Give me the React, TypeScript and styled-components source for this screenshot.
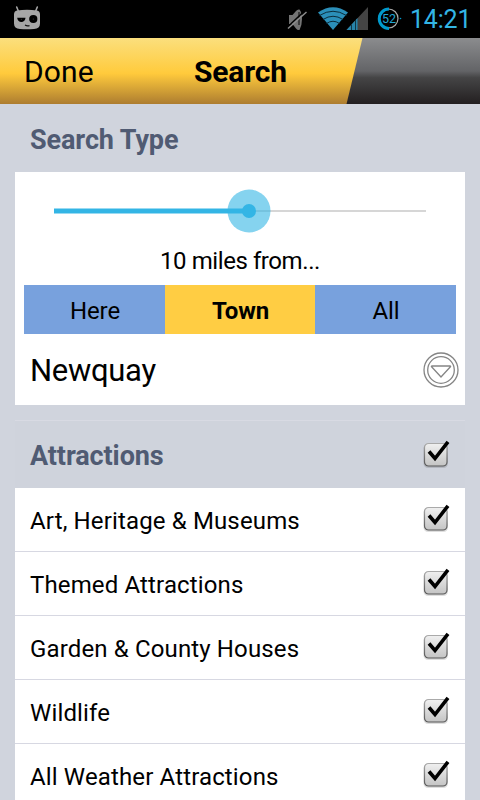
import React, { useState } from 'react';
import styled, { createGlobalStyle } from 'styled-components';

const GlobalStyle = createGlobalStyle`
  * { box-sizing: border-box; }
  body { margin: 0; background: #d0d4dd; font-family: Roboto, sans-serif; color: #000; }
  button { font: inherit; color: inherit; border: 0; padding: 0; margin: 0; background: none; }
`;

const Screen = styled.div`
  width: 480px;
  height: 800px;
  overflow: hidden;
  background: #d0d4dd;
`;

const StatusBar = styled.div`
  display: flex;
  justify-content: space-between;
  height: 38px;
  background: #000;
`;

const StatusIcons = styled.div`
  display: flex;
`;

const Clock = styled.span`
  width: 70px;
  font-size: 25px;
  line-height: 40px;
  letter-spacing: -0.2px;
  white-space: nowrap;
  color: #33b5e5;
`;

const TitleBar = styled.header`
  height: 66px;
  background: linear-gradient(#8b8c8e 0%, #636467 50%, #454546 60%, #231f20 100%);
`;

const TitleTab = styled.div`
  display: flex;
  align-items: center;
  width: 363px;
  height: 66px;
  padding-left: 24px;
  background: linear-gradient(#fbdf7d 0%, #ffcc40 50%, #ffca3c 54%, #ad7d30 100%);
  clip-path: polygon(0 0, 362.5px 0, 346.5px 100%, 0 100%);
`;

const DoneButton = styled.button`
  width: 170px;
  padding-top: 1px;
  text-align: left;
  font-size: 30px;
  line-height: 66px;
  letter-spacing: 0.15px;
`;

const Title = styled.h1`
  margin: 0;
  padding-top: 1px;
  font-size: 30px;
  font-weight: 700;
  line-height: 66px;
  letter-spacing: -0.15px;
`;

const Heading = styled.h2`
  margin: 0;
  font-size: 27px;
  font-weight: 700;
  letter-spacing: -0.1px;
  color: #505b73;
`;

const TypeHeader = styled.div`
  display: flex;
  align-items: center;
  height: 68px;
  padding: 4px 30px 0;
`;

const Panel = styled.section`
  height: 233px;
  margin: 0 15px;
  background: #fff;
`;

const SliderBox = styled.div`
  height: 72px;
  padding: 17px 0 0 39px;
`;

const Distance = styled.div`
  height: 41px;
  line-height: 35px;
  font-size: 24px;
  letter-spacing: -0.42px;
  text-align: center;
`;

const Segments = styled.div`
  display: grid;
  grid-template-columns: 141px 150px 141px;
  grid-template-rows: 49px;
  height: 49px;
  margin: 0 9px;
`;

const Segment = styled.button<{ $active: boolean }>`
  padding: 3px 0 0 1px;
  font-size: 24px;
  line-height: 46px;
  letter-spacing: -0.1px;
  font-weight: ${p => (p.$active ? 700 : 400)};
  background: ${p => (p.$active ? '#ffcd43' : '#78a1dd')};
`;

const TownRow = styled.div`
  display: flex;
  justify-content: space-between;
  align-items: center;
  height: 71px;
  padding: 1px 6px 0 15px;
`;

const Town = styled.span`
  padding-top: 1px;
  font-size: 31px;
  letter-spacing: -0.3px;
`;

const Group = styled.section`
  margin: 15px 15px 0;
`;

const GroupHeader = styled.div`
  display: flex;
  justify-content: space-between;
  align-items: center;
  height: 68px;
  padding: 3px 10px 0 15px;
  border-top: 1px solid #d8dae3;
  background: #cfd3dc;
`;

const Row = styled.div`
  display: flex;
  justify-content: space-between;
  align-items: center;
  height: 64px;
  padding: 0 10px 0 15px;
  border-bottom: 1px solid #d7d8e2;
  background: #fff;
`;

const RowLabel = styled.span`
  padding-top: 2px;
  font-size: 24px;
  letter-spacing: 0.14px;
`;

const CheckButton = styled.button`
  display: flex;
  width: 32px;
  height: 36px;
`;

function RobotIcon() {
  return (
    <svg width="60" height="38" viewBox="0 0 60 38">
      <path d="M16.700 7l2 5M37.300 7l-2 5" stroke="#a6a6a6" strokeWidth="1.600" strokeLinecap="round" />
      <path d="M17 10.500q10-1.500 20 0q3 .5 3 4v9q0 5-6 5.500q-7 .6-14 0q-6-.5-6-5.500v-9q0-3.500 3-4z" fill="#a6a6a6" />
      <path d="M17.200 17.800h8.300a4.150 4.150 0 0 1-8.300 0z" />
      <circle cx="33.300" cy="19" r="4.100" />
      <circle cx="33.300" cy="19" r=".6" fill="#444" />
      <circle cx="21.300" cy="19.200" r=".5" fill="#444" />
      <path d="M25 25q2 1.300 4.500.6" fill="none" stroke="#111" strokeWidth="1.200" />
    </svg>
  );
}

function MuteIcon() {
  return (
    <svg width="28" height="38" viewBox="286 0 28 38">
      <path d="M289 15h3.500l3.500-4q1.500-2 3.500-1.500q2.500 3 2.500 9.500t-2.500 11q-2 .5-3.500-1.500l-3.500-4.500h-3.500z" fill="#737373" />
      <path d="M299 12v13" stroke="#2a2a2a" strokeWidth="1.500" />
      <path d="M287 27.500l18-17" stroke="#000" strokeWidth="1.500" />
      <path d="M288 28.500L306.500 12" stroke="#8d8d8d" strokeWidth="1.500" />
    </svg>
  );
}

function WifiIcon() {
  return (
    <svg width="31" height="38" viewBox="314 0 31 38" overflow="visible">
      <path d="M318 12.500q15-10.500 30 0L333 30z" fill="#2b8fb9" />
      <g fill="none" stroke="#0b2d3b" strokeWidth="1">
        <path d="M319.500 15.500q13.500-8.500 27 0" />
        <path d="M323 19.500q10-6.500 20 0" />
        <path d="M326.500 23.500q6.500-4.500 13 0" />
      </g>
    </svg>
  );
}

function SignalIcon() {
  return (
    <svg width="30" height="38" viewBox="345 0 30 38">
      <path d="M346.500 30L368 7v23z" fill="#444" />
      <path d="M346.500 30l11-12v12z" fill="#2784aa" />
      <path d="M351.500 24.500v5.500M355.500 20v10" stroke="#103746" />
    </svg>
  );
}

function BatteryIcon() {
  return (
    <svg width="35" height="38" viewBox="375 0 35 38">
      <circle cx="388.500" cy="18.500" r="9.500" fill="none" stroke="#aaa" strokeWidth="1.200" />
      <path d="M389 9a9.500 9.500 0 0 0 0 19.500" fill="none" stroke="#0099cc" strokeWidth="3" />
      <circle cx="400.500" cy="18.500" r=".8" fill="#0099cc" />
      <text x="389" y="23" textAnchor="middle" fontFamily="Roboto, sans-serif" fontSize="12.500" fill="#20a5d5">52</text>
    </svg>
  );
}

function Slider() {
  return (
    <svg width="374" height="44" viewBox="54 189 374 44">
      <path d="M249 211h177" stroke="#d6d6d6" strokeWidth="2" />
      <path d="M54 211h195" stroke="#99daf2" strokeWidth="6" />
      <path d="M54 211h195" stroke="#33b5e5" strokeWidth="4" />
      <circle cx="249" cy="211" r="21.500" fill="#33b5e5" fillOpacity=".6" />
      <circle cx="249" cy="211" r="7" fill="#33b5e5" />
    </svg>
  );
}

function DropIcon() {
  return (
    <svg width="36" height="36" viewBox="0 0 36 36" fill="none" stroke="#858585" strokeWidth="1.300">
      <circle cx="18" cy="18" r="17" />
      <circle cx="18" cy="18" r="13.300" />
      <path d="M9 14h18q1 0 .4.800L18 25 8.600 14.800q-.6-.8.4-.8z" />
    </svg>
  );
}

function Checkbox({ label }: { label: string }) {
  const [checked, setChecked] = useState(true);
  return (
    <CheckButton role="checkbox" aria-checked={checked} aria-label={label} onClick={() => setChecked(!checked)}>
      <svg width="32" height="36" viewBox="0 1 32 36">
        <defs>
          <linearGradient id="box" x2="0" y2="1">
            <stop stopColor="#f0f0f0" />
            <stop offset="1" stopColor="#c4c4c4" />
          </linearGradient>
          <linearGradient id="edge" x2="0" y2="1">
            <stop stopColor="#aaa" />
            <stop offset="1" stopColor="#555" />
          </linearGradient>
        </defs>
        <rect x=".5" y="7" width="24.500" height="24" rx="4.500" fill="#000" opacity=".13" />
        <rect x="1.500" y="6.500" width="22.500" height="22.500" rx="4" fill="url(#box)" stroke="url(#edge)" strokeWidth="1.200" />
        {checked && <path d="M6 14.500L12 21.500 25 4.800" fill="none" stroke="#000" strokeWidth="3.600" />}
      </svg>
    </CheckButton>
  );
}

const categories = [
  'Art, Heritage & Museums',
  'Themed Attractions',
  'Garden & County Houses',
  'Wildlife',
  'All Weather Attractions',
];

const scopes = ['Here', 'Town', 'All'];

export default function App() {
  const [scope, setScope] = useState('Town');
  return (
    <Screen>
      <GlobalStyle />
      <StatusBar>
        <RobotIcon />
        <StatusIcons>
          <MuteIcon />
          <WifiIcon />
          <SignalIcon />
          <BatteryIcon />
          <Clock>14:21</Clock>
        </StatusIcons>
      </StatusBar>
      <TitleBar>
        <TitleTab>
          <DoneButton>Done</DoneButton>
          <Title>Search</Title>
        </TitleTab>
      </TitleBar>
      <TypeHeader>
        <Heading>Search Type</Heading>
      </TypeHeader>
      <Panel>
        <SliderBox>
          <Slider />
        </SliderBox>
        <Distance>10 miles from...</Distance>
        <Segments>
          {scopes.map(s => (
            <Segment key={s} $active={s === scope} onClick={() => setScope(s)}>{s}</Segment>
          ))}
        </Segments>
        <TownRow>
          <Town>Newquay</Town>
          <DropIcon />
        </TownRow>
      </Panel>
      <Group>
        <GroupHeader>
          <Heading>Attractions</Heading>
          <Checkbox label="Attractions" />
        </GroupHeader>
        {categories.map(name => (
          <Row key={name}>
            <RowLabel>{name}</RowLabel>
            <Checkbox label={name} />
          </Row>
        ))}
      </Group>
    </Screen>
  );
}
